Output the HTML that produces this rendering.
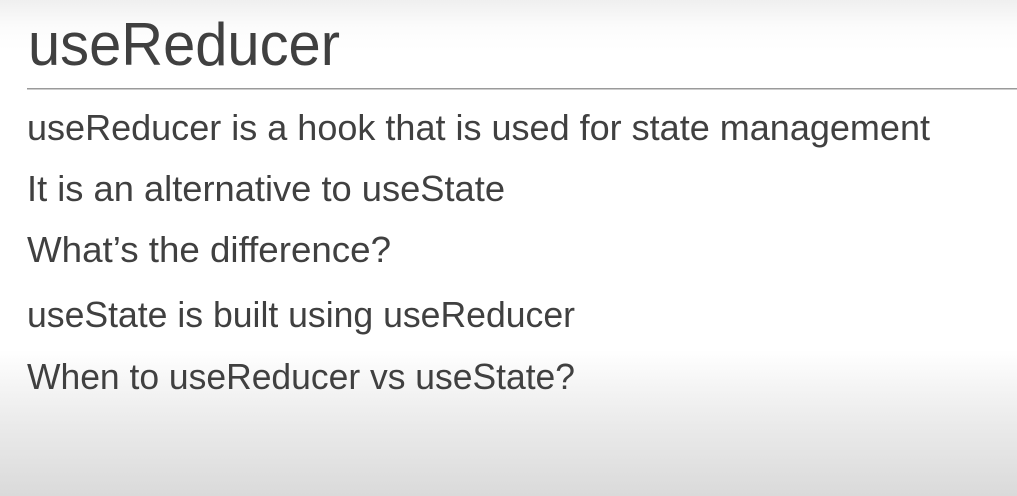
<!DOCTYPE html>
<html><head><meta charset="utf-8"><style>
html,body{margin:0;padding:0;width:1017px;height:496px;overflow:hidden}
body{background:linear-gradient(to bottom,#efefef 0px,#fbfbfb 25px,#ffffff 50px,#ffffff 350px,#eeeeee 410px,#dadada 496px)}
svg{display:block}
text{font-family:"Liberation Sans",sans-serif;fill:#404040}
</style></head><body>
<svg width="1017" height="496" viewBox="0 0 1017 496">
<text x="28" y="65" font-size="60" textLength="312" lengthAdjust="spacingAndGlyphs">useReducer</text>
<rect x="27" y="88" width="990" height="1.5" fill="#9a9a9a"/>
<text x="27" y="140" font-size="36" textLength="903" lengthAdjust="spacingAndGlyphs">useReducer is a hook that is used for state management</text>
<text x="27" y="201" font-size="36" textLength="478" lengthAdjust="spacingAndGlyphs">It is an alternative to useState</text>
<text x="27" y="262" font-size="36" textLength="364" lengthAdjust="spacingAndGlyphs">What’s the difference?</text>
<text x="27" y="327" font-size="36" textLength="548" lengthAdjust="spacingAndGlyphs">useState is built using useReducer</text>
<text x="27" y="389" font-size="36" textLength="548" lengthAdjust="spacingAndGlyphs">When to useReducer vs useState?</text>
</svg>
</body></html>
